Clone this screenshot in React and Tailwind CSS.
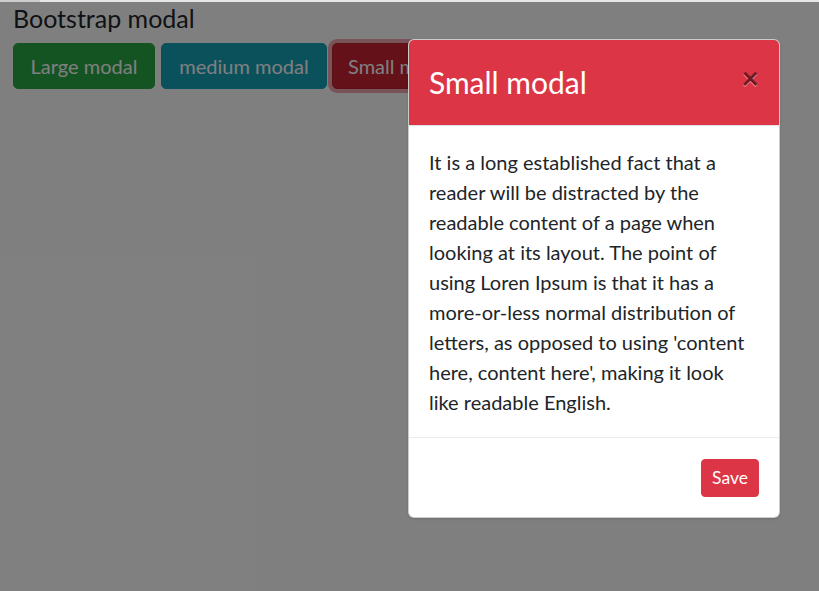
import React from "react";

const font = { fontFamily: '"Lato", "Noto Sans", sans-serif' };

const lines = [
  "It is a long established fact that a",
  "reader will be distracted by the",
  "readable content of a page when",
  "looking at its layout. The point of",
  "using Loren Ipsum is that it has a",
  "more-or-less normal distribution of",
  "letters, as opposed to using 'content",
  "here, content here', making it look",
  "like readable English.",
];

export default function App() {
  return (
    <div className="w-[819px] h-[591px] overflow-hidden flex flex-col" style={font}>
      {/* browser strip */}
      <div className="h-[2px] flex bg-[#e6e6e6]">
        <div className="w-10 bg-[#cdcdcd]" />
      </div>

      <div className="relative flex-1 bg-white">
        {/* PAGE */}
        <div className="px-[13px] pt-[1px]">
          <h4 className="text-[25px] leading-[30px] text-[#212529]">Bootstrap modal</h4>
          <div className="mt-[10px] flex gap-[6px]">
            <button className="w-[142px] h-[46px] text-[20px] text-white bg-[#28a745] border border-[#28a745] rounded-[5px]">
              Large modal
            </button>
            <button className="w-[166px] h-[46px] text-[20px] text-white bg-[#17a2b8] border border-[#17a2b8] rounded-[5px]">
              medium modal
            </button>
            <button className="ml-[-1px] w-[140px] h-[46px] px-[15px] text-left text-[20px] text-white bg-[#c82333] border border-[#bd2130] rounded-[5px] shadow-[0_0_0_4px_rgba(225,83,97,0.5)]">
              Small modal
            </button>
          </div>
        </div>

        {/* BACKDROP */}
        <div className="absolute inset-0 bg-black/50" />

        {/* MODAL */}
        <div className="absolute left-[408px] top-[37px] w-[372px] bg-white border border-black/20 rounded-[6px] overflow-hidden shadow-sm">
          <div className="flex items-start justify-between bg-[#dc3545] px-5 py-5 border-b border-[#dee2e6]">
            <h4 className="text-[30px] leading-[45px] text-white">Small modal</h4>
            <button
              className="text-[30px] leading-none font-bold text-black opacity-50 mt-[2px]"
              style={{ textShadow: "0 1px 0 #fff" }}
            >
              ×
            </button>
          </div>

          <div className="px-5 pt-[21px] pb-5 text-[20px] leading-[30px] text-[#212529]">
            {lines.map((l) => (
              <div key={l} className="whitespace-nowrap">{l}</div>
            ))}
          </div>

          <div className="flex justify-end px-5 pt-[21px] pb-5 border-t border-[#e9ecef]">
            <button className="h-[38px] px-[10px] text-[17.5px] leading-[26px] text-white bg-[#dc3545] border border-[#dc3545] rounded-[4px]">
              Save
            </button>
          </div>
        </div>
      </div>
    </div>
  );
}
